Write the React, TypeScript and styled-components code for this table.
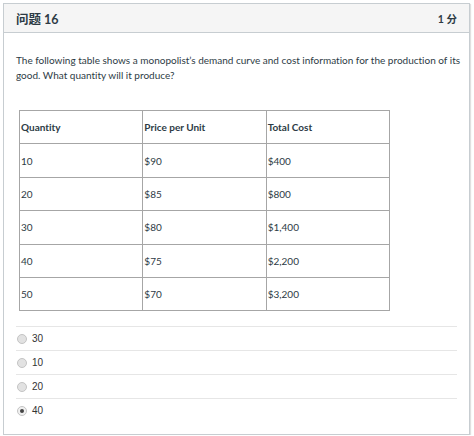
import React from "react";
import styled, { createGlobalStyle } from "styled-components";

const Global = createGlobalStyle`
  html, body { margin: 0; padding: 0; background: #ffffff; }
  body { font-family: "Lato", "Noto Sans CJK SC", sans-serif; color: #2d3b45; font-variant-ligatures: none; }
`;

const Panel = styled.div`
  margin: 3px 4px 0 3px;
  width: 465px;
  height: 430px;
  border: 1px solid #c7cdd1;
  box-shadow: 1px 1px 1px rgba(0, 0, 0, 0.12);
  box-sizing: content-box;
  overflow: hidden;
`;

const Header = styled.div`
  display: flex;
  justify-content: space-between;
  align-items: center;
  height: 28px;
  padding: 0 12px 0 12px;
  background: #f5f5f5;
  border-bottom: 1px solid #c7cdd1;
`;

const Title = styled.div`
  font-family: "Lato", "Noto Sans CJK SC", sans-serif;
  font-weight: 700;
  font-size: 12.5px;
  color: #2d3b45;
`;

const Points = styled.div`
  font-family: "Lato", "Noto Sans CJK SC", sans-serif;
  font-weight: 700;
  font-size: 10.5px;
  color: #2d3b45;
`;

const Body = styled.div`
  padding: 20px 12px 0 12px;
`;

const Question = styled.p`
  margin: 0 -6px 0 0;
  font-size: 10px;
  line-height: 15px;
  color: #2d3b45;
`;

const Table = styled.table`
  margin: 27px 0 0 3px;
  width: 371px;
  border-collapse: collapse;
  border: 1px solid #7a7a7a;
`;

const Cell = styled.td<{ $head?: boolean }>`
  height: 32.4px;
  padding: 0 1px;
  border: 1px solid #a6a6a6;
  font-size: 10px;
  font-weight: ${(p) => (p.$head ? 700 : 400)};
  color: #2d3b45;
  vertical-align: middle;
  width: 33.3%;
`;

const Answers = styled.div`
  margin-top: 15px;
`;

const Answer = styled.div`
  display: flex;
  align-items: center;
  height: 23px;
  border-top: 1px solid #e6e6e6;
  padding-left: 1px;
`;

const Radio = styled.span<{ $checked?: boolean }>`
  width: 8px;
  height: 8px;
  border-radius: 50%;
  border: 1px solid #c4c4c4;
  background: ${(p) => (p.$checked ? "#f0f0f0" : "#e2e2e2")};
  display: flex;
  align-items: center;
  justify-content: center;
  margin-right: 5px;
  &::after {
    content: "";
    display: ${(p) => (p.$checked ? "block" : "none")};
    width: 4px;
    height: 4px;
    border-radius: 50%;
    background: #444;
  }
`;

const AnswerText = styled.span`
  font-family: "Liberation Sans", Arial, sans-serif;
  font-size: 10px;
  color: #333;
`;

const rows = [
  ["10", "$90", "$400"],
  ["20", "$85", "$800"],
  ["30", "$80", "$1,400"],
  ["40", "$75", "$2,200"],
  ["50", "$70", "$3,200"],
];

const answers = [
  { v: "30", c: false },
  { v: "10", c: false },
  { v: "20", c: false },
  { v: "40", c: true },
];

export default function App() {
  return (
    <>
      <Global />
      <Panel>
        <Header>
          <Title>问题 16</Title>
          <Points>1 分</Points>
        </Header>
        <Body>
          <Question>
            The following table shows a monopolist’s demand curve and cost information for the production of its
            good. What quantity will it produce?
          </Question>
          <Table>
            <tbody>
              <tr>
                <Cell $head>Quantity</Cell>
                <Cell $head>Price per Unit</Cell>
                <Cell $head>Total Cost</Cell>
              </tr>
              {rows.map((r) => (
                <tr key={r[0]}>
                  {r.map((c, i) => (
                    <Cell key={i}>{c}</Cell>
                  ))}
                </tr>
              ))}
            </tbody>
          </Table>
          <Answers>
            {answers.map((a) => (
              <Answer key={a.v}>
                <Radio $checked={a.c} />
                <AnswerText>{a.v}</AnswerText>
              </Answer>
            ))}
          </Answers>
        </Body>
      </Panel>
    </>
  );
}
